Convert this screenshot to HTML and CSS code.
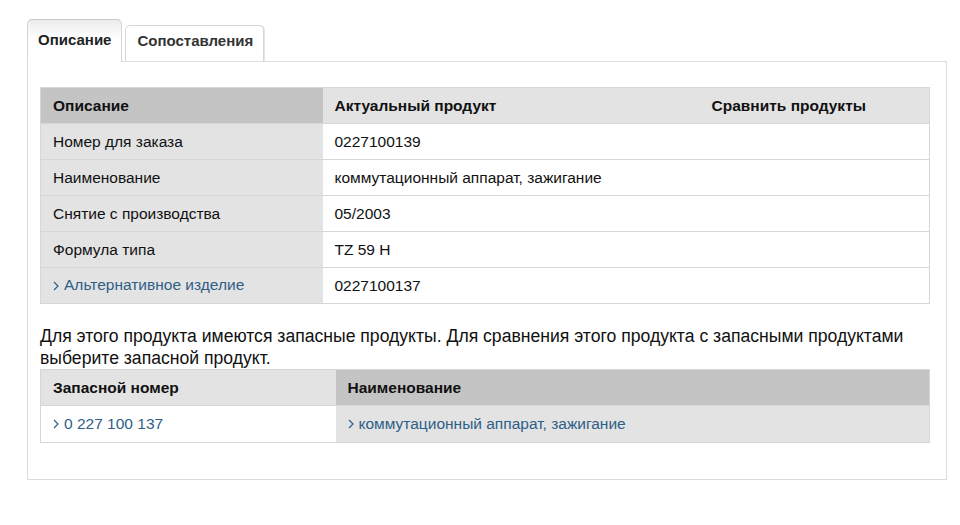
FILE: index.html
```html
<!DOCTYPE html>
<html lang="ru">
<head>
<meta charset="utf-8">
<title>Описание</title>
<link rel="stylesheet" href="styles.css">
</head>
<body>
<div class="page">
  <div class="tabs">
    <div class="tab tab-active">Описание</div>
    <div class="tab">Сопоставления</div>
  </div>
  <div class="panel">
    <table class="grid compare">
      <colgroup><col class="c1"><col class="c2"><col></colgroup>
      <thead>
        <tr>
          <th class="dark">Описание</th>
          <th>Актуальный продукт</th>
          <th>Сравнить продукты</th>
        </tr>
      </thead>
      <tbody>
        <tr><td class="label">Номер для заказа</td><td colspan="2">0227100139</td></tr>
        <tr><td class="label">Наименование</td><td colspan="2">коммутационный аппарат, зажигание</td></tr>
        <tr><td class="label">Снятие с производства</td><td colspan="2">05/2003</td></tr>
        <tr><td class="label">Формула типа</td><td colspan="2">TZ 59 H</td></tr>
        <tr><td class="label"><a class="link" href="#"><svg class="chev" viewBox="0 0 6 10" width="6" height="10"><path d="M1 1l4 4-4 4" fill="none" stroke="currentColor" stroke-width="1.2"/></svg>Альтернативное изделие</a></td><td colspan="2">0227100137</td></tr>
      </tbody>
    </table>

    <p class="note">Для этого продукта имеются запасные продукты. Для сравнения этого продукта с запасными продуктами выберите запасной продукт.</p>

    <table class="grid spares">
      <colgroup><col class="s1"><col></colgroup>
      <thead>
        <tr>
          <th>Запасной номер</th>
          <th class="dark">Наименование</th>
        </tr>
      </thead>
      <tbody>
        <tr>
          <td><a class="link" href="#"><svg class="chev" viewBox="0 0 6 10" width="6" height="10"><path d="M1 1l4 4-4 4" fill="none" stroke="currentColor" stroke-width="1.2"/></svg>0 227 100 137</a></td>
          <td class="label"><a class="link" href="#"><svg class="chev" viewBox="0 0 6 10" width="6" height="10"><path d="M1 1l4 4-4 4" fill="none" stroke="currentColor" stroke-width="1.2"/></svg>коммутационный аппарат, зажигание</a></td>
        </tr>
      </tbody>
    </table>
  </div>
</div>
</body>
</html>
```

FILE: styles.css
```css
html, body {
  margin: 0;
  padding: 0;
  background: #fff;
}

body {
  font-family: Arial, "Liberation Sans", sans-serif;
  color: #111;
}

.page {
  padding: 19px 0 0 27px;
  width: 920px;
}

/* tab strip */
.tabs {
  display: flex;
  align-items: flex-end;
  gap: 3px;
  position: relative;
  z-index: 1;
}

.tab {
  box-sizing: border-box;
  height: 36px;
  padding: 0 10px 6px 11px;
  border: 1px solid #d6d6d6;
  border-bottom: none;
  border-radius: 5px 5px 0 0;
  background: #fff;
  font-size: 15px;
  font-weight: bold;
  color: #333;
  display: flex;
  align-items: center;
  box-shadow: 1px 0 0 #e6e6e6;
}

.tab-active {
  height: 43px;
  padding: 0 10px 3px 10px;
  margin-bottom: -1px;
  border-top-color: #c8c8c8;
  background: linear-gradient(#ececec, #fff 45%);
  color: #222;
  box-shadow: none;
}

/* content panel */
.panel {
  border: 1px solid #dcdcdc;
  padding: 25px 15px 36px 12px;
}

.grid {
  width: 890px;
  border-collapse: collapse;
  table-layout: fixed;
  border: 1px solid #d6d6d6;
  font-size: 15.5px;
}

.compare .c1 { width: 282px; }
.compare .c2 { width: 377px; }
.spares .s1 { width: 295px; }

.grid th,
.grid td {
  height: 36px;
  box-sizing: border-box;
  padding: 0 12px 0 12px;
  text-align: left;
  vertical-align: middle;
  border-top: 1px solid #d6d6d6;
  white-space: nowrap;
}

.grid th {
  font-weight: bold;
  background: #e3e3e4;
  color: #111;
}

.grid th.dark {
  background: #c4c4c4;
}

.grid td {
  background: #fff;
  color: #111;
}

.grid td.label {
  background: #e3e3e4;
}

.spares td {
  height: 37px;
}

.link {
  color: #2f5e86;
  text-decoration: none;
  display: inline-flex;
  align-items: center;
}

.chev {
  margin-right: 5px;
  margin-top: 1px;
}

.note {
  margin: 21px 0 0;
  font-size: 17.6px;
  line-height: 22px;
  color: #111;
}
```
